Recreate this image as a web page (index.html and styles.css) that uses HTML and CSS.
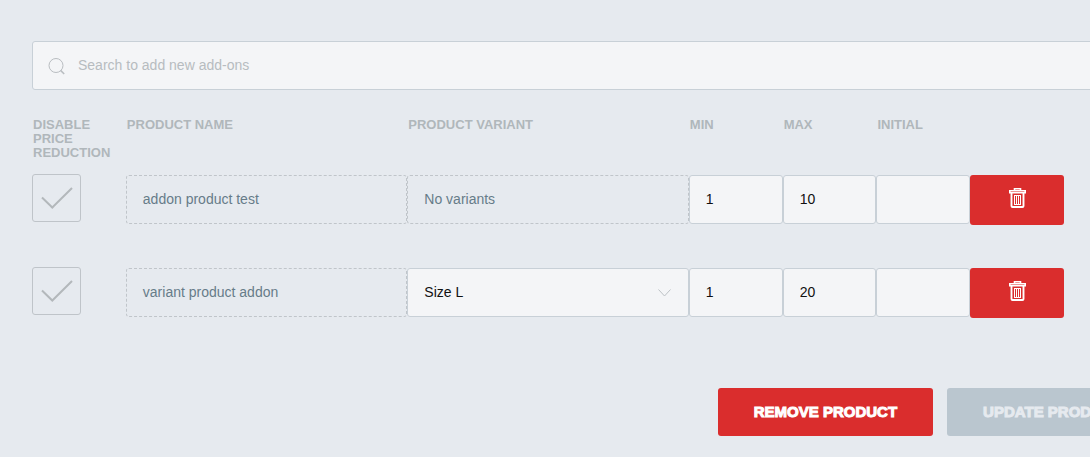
FILE: index.html
```
<!DOCTYPE html>
<html lang="en">
<head>
<meta charset="utf-8">
<title>Product add-ons</title>
<link rel="stylesheet" href="styles.css">
</head>
<body>
<form class="addons">
	<label class="search">
		<svg class="search-icon" width="18" height="18" viewBox="0 0 18 18" fill="none" stroke="currentColor"><circle cx="8" cy="8.5" r="7"/><path d="M12.6 13.4l3.6 3.6" stroke-width="1.5"/></svg>
		<input class="search-input" type="text" placeholder="Search to add new add-ons" aria-label="Search to add new add-ons">
	</label>

	<table class="addon-table">
	<thead>
	<tr>
		<th id="h-disable">Disable price reduction</th>
		<th colspan="3">Product name</th>
		<th colspan="3">Product variant</th>
		<th id="h-min">Min</th>
		<th id="h-max">Max</th>
		<th id="h-initial">Initial</th>
		<td></td>
		<td></td>
	</tr>
	</thead>
	<tbody>
	<tr>
		<td><input class="tick" type="checkbox" aria-labelledby="h-disable"></td>
		<td colspan="3"><div class="field fixed">addon product test</div></td>
		<td colspan="3"><div class="field fixed">No variants</div></td>
		<td><input class="field" type="text" value="1" aria-labelledby="h-min"></td>
		<td><input class="field" type="text" value="10" aria-labelledby="h-max"></td>
		<td><input class="field" type="text" aria-labelledby="h-initial"></td>
		<td><button class="delete" type="button" aria-label="Delete">
			<svg width="17" height="20" viewBox="0 0 17 20" fill="none" stroke="#fff"><path d="M5.5 2.5V.7h6v1.8" stroke-width="1.6"/><path d="M.8 2.8h15.4v2H.8z" stroke-width="1.6"/><path d="M2.5 5v13q0 1 1 1h10q1 0 1-1V5" stroke-width="1.9"/><path d="M5.5 7.5v9M7.5 7.5v9M9.5 7.5v9M11.5 7.5v9M5 7.5h7M5 16.5h7"/></svg>
		</button></td>
		<td></td>
	</tr>
	<tr>
		<td><input class="tick" type="checkbox" aria-labelledby="h-disable"></td>
		<td colspan="3"><div class="field fixed">variant product addon</div></td>
		<td colspan="3"><select class="field variant" aria-label="Product variant"><option>Size L</option></select></td>
		<td><input class="field" type="text" value="1" aria-labelledby="h-min"></td>
		<td><input class="field" type="text" value="20" aria-labelledby="h-max"></td>
		<td><input class="field" type="text" aria-labelledby="h-initial"></td>
		<td><button class="delete" type="button" aria-label="Delete">
			<svg width="17" height="20" viewBox="0 0 17 20" fill="none" stroke="#fff"><path d="M5.5 2.5V.7h6v1.8" stroke-width="1.6"/><path d="M.8 2.8h15.4v2H.8z" stroke-width="1.6"/><path d="M2.5 5v13q0 1 1 1h10q1 0 1-1V5" stroke-width="1.9"/><path d="M5.5 7.5v9M7.5 7.5v9M9.5 7.5v9M11.5 7.5v9M5 7.5h7M5 16.5h7"/></svg>
		</button></td>
		<td></td>
	</tr>
	</tbody>
	</table>

	<div class="actions">
		<button class="btn btn-remove" type="button">Remove product</button>
		<button class="btn btn-update" type="button">Update product</button>
	</div>
</form>
</body>
</html>
```
FILE: styles.css
```
*
{
	box-sizing:border-box;
}
body
{
	margin:0;
	background:#e6eaef;
	font-family:"Liberation Sans", Arial, sans-serif;
	font-size:14px;
	overflow-x:hidden;
}
input, select, button
{
	margin:0;
	font:inherit;
}
.addons
{
	min-width:1190px;
	padding:41px 32px 20px;
}
.search
{
	display:flex;
	align-items:center;
	gap:12px;
	height:49px;
	padding:0 15px;
	border:1px solid #c8d0d7;
	border-radius:3px;
	background:#f4f5f7;
}
.search-icon
{
	color:#b9bdc1;
}
.search-input
{
	flex:1;
	height:18px;
	padding:0 0 2px;
	border:0;
	outline:0;
	background:none;
}
.search-input::placeholder
{
	color:#b7bcc0;
}
.addon-table
{
	width:100%;
	margin-top:28px;
	table-layout:fixed;
	border-collapse:separate;
	border-spacing:0;
}
.addon-table th
{
	padding:0 0 14px 1px;
	color:#b0b7bb;
	font-size:13px;
	line-height:14px;
	text-align:left;
	text-transform:uppercase;
	vertical-align:top;
}
.addon-table td
{
	padding:0;
	vertical-align:top;
}
.addon-table tbody td
{
	height:93px;
	padding-top:1px;
}
.addon-table tbody td:first-child
{
	padding-top:0;
}
.tick
{
	display:block;
	width:49px;
	height:48px;
	border:1px solid #bfc4c9;
	border-radius:3px;
	appearance:none;
	background:url("data:image/svg+xml,%3Csvg xmlns='http://www.w3.org/2000/svg' width='32' height='22' fill='none' stroke='%23b3b8bb' stroke-width='2'%3E%3Cpath d='M1 10.5l10.3 10L31 1'/%3E%3C/svg%3E") center no-repeat;
}
.field
{
	display:block;
	width:100%;
	height:49px;
	padding:0 16px;
	border:1px solid #c8d0d7;
	border-radius:3px;
	background:#f4f5f7;
	color:#111;
	line-height:47px;
}
input.field
{
	padding-bottom:2px;
}
.fixed
{
	border:1px dashed #c0c5ca;
	background:none;
	color:#667c89;
}
.variant
{
	appearance:none;
	background:#f4f5f7 url("data:image/svg+xml,%3Csvg xmlns='http://www.w3.org/2000/svg' width='13' height='8' fill='none' stroke='%23bcc1c5'%3E%3Cpath d='M.5 .5l6 6.5 6-6.5'/%3E%3C/svg%3E") right 17px center no-repeat;
}
.delete
{
	display:flex;
	justify-content:center;
	width:100%;
	height:50px;
	padding:13px 0 0 1px;
	border:0;
	border-radius:3px;
	background:#da2d2d;
}
.actions
{
	display:flex;
	justify-content:flex-end;
	gap:14px;
	margin-top:28px;
}
.btn
{
	height:48px;
	padding:0 36px 1px;
	border:0;
	border-radius:3px;
	font-size:15px;
	font-weight:bold;
	text-transform:uppercase;
	-webkit-text-stroke:1px;
}
.btn-remove
{
	background:#da2d2d;
	color:#fff;
}
.btn-update
{
	background:#bac6cf;
	color:#e6eaef;
}
```
